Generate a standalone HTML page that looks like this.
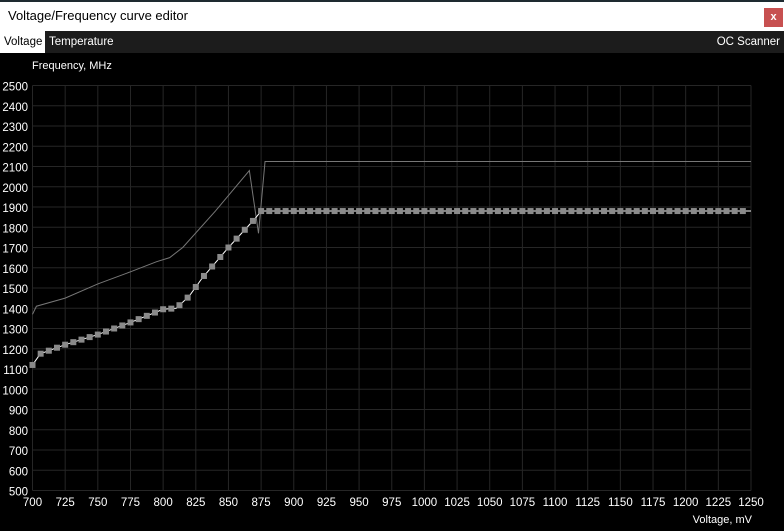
<!DOCTYPE html>
<html><head><style>
body{margin:0;width:784px;height:531px;background:#000;overflow:hidden;font-family:"Liberation Sans",sans-serif;position:relative}
.t{position:absolute;white-space:nowrap}
</style></head><body>
<div style="position:absolute;left:0;top:0;width:784px;height:2px;background:#1e2a30"></div>
<div style="position:absolute;left:0;top:2px;width:784px;height:29px;background:#fff"></div>
<div class="t" style="left:8px;top:8px;font-size:13px;color:#000">Voltage/Frequency curve editor</div>
<div style="position:absolute;left:764px;top:8px;width:19px;height:19px;background:#c75050;color:#fff;font-size:11px;font-weight:bold;text-align:center;line-height:18px">x</div>
<div style="position:absolute;left:0;top:31px;width:784px;height:22px;background:#1c1c1c"></div>
<div style="position:absolute;left:0;top:31px;width:45px;height:22px;background:#fff"></div>
<div class="t" style="left:4px;top:36px;font-size:11.5px;color:#000">Voltage</div>
<div class="t" style="left:49px;top:36px;font-size:11.5px;color:#fff">Temperature</div>
<div class="t" style="right:4px;top:36px;font-size:11.5px;color:#fff">OC Scanner</div>
<div class="t" style="left:32px;top:60px;font-size:11px;color:#fff">Frequency, MHz</div>
<div class="t" style="right:32px;top:514px;font-size:11px;color:#fff">Voltage, mV</div>
<svg id="g" width="784" height="531" style="position:absolute;left:0;top:0" font-family="Liberation Sans, sans-serif" font-size="11.5"></svg>
<script>
var s='',x0=32.5,x1=751,y0=490.5,y1=85.5;
function X(v){return x0+(v-700)/550*(x1-x0)}
function Y(f){return y0-(f-500)/2000*(y0-y1)}
for(var f=500;f<=2500;f+=100){var y=Y(f);s+='<line x1="'+x0+'" x2="'+x1+'" y1="'+y+'" y2="'+y+'" stroke="#262626"/>';s+='<text x="28" y="'+(y+5)+'" text-anchor="end" fill="#fff">'+f+'</text>';}
for(var v=700;v<=1250;v+=25){var x=X(v);s+='<line x1="'+x+'" x2="'+x+'" y1="'+y1+'" y2="'+y0+'" stroke="#262626"/>';s+='<text x="'+x+'" y="506" text-anchor="middle" fill="#fff">'+v+'</text>';}
var gp=[[700,1370],[703,1410],[725,1450],[750,1520],[775,1580],[795,1630],[805,1650],[815,1700],[840,1880],[866,2080],[873,1770],[878,2125],[1250,2125]];
s+='<polyline fill="none" stroke="#777" stroke-width="1" points="'+gp.map(function(p){return X(p[0])+','+Y(p[1])}).join(' ')+'"/>';
var wp=[[700,1120],[706,1175],[725,1220],[750,1270],[775,1330],[800,1395],[810,1400],[820,1460],[830,1550],[850,1700],[870,1840],[875,1880],[1250,1880]];
function F(v){for(var i=0;i<wp.length-1;i++){if(v<=wp[i+1][0]){var a=wp[i],b=wp[i+1];return a[1]+(b[1]-a[1])*(v-a[0])/(b[0]-a[0]);}}return 1880}
s+='<polyline fill="none" stroke="#fff" stroke-width="1" points="'+wp.map(function(p){return X(p[0])+','+Y(p[1])}).join(' ')+'"/>';
for(var v=700;v<=1245;v+=6.25){var x=X(v),y=Y(F(v));s+='<rect x="'+(x-3)+'" y="'+(y-3)+'" width="6" height="6" fill="#8a8a8a"/>';}
document.getElementById('g').innerHTML=s;
</script>
</body></html>
